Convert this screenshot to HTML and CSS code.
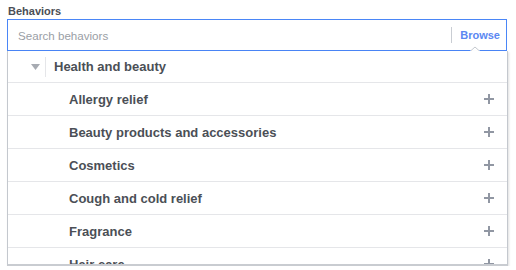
FILE: index.html
```html
<!DOCTYPE html>
<html>
<head>
<meta charset="utf-8">
<link rel="stylesheet" href="styles.css">
</head>
<body>
<div class="field">
  <div class="label">Behaviors</div>
  <div class="search">
    <span class="placeholder">Search behaviors</span>
    <span class="sep"></span>
    <span class="browse">Browse</span>
    <svg class="caret" width="10" height="5" viewBox="0 0 10 5"><path d="M0 5 L5 0.5 L10 5 Z" fill="#fff"/><path d="M0.5 5 L5 1 L9.5 5" fill="none" stroke="#c4c8ce" stroke-width="1"/></svg>
  </div>
  <div class="dropdown">
    <div class="thumb"></div>
    <div class="head">
      <svg class="tri" width="9" height="6" viewBox="0 0 9 6"><path d="M0 0 H9 L4.5 6 Z" fill="#a7abb2"/></svg>
      <span class="vsep"></span>
      <span class="head-text">Health and beauty</span>
    </div>
    <div class="row"><span>Allergy relief</span><svg class="plus" width="10" height="10" viewBox="0 0 10 10"><path d="M5 0V10M0 5H10" stroke="#9197a3" stroke-width="2"/></svg></div>
    <div class="row"><span>Beauty products and accessories</span><svg class="plus" width="10" height="10" viewBox="0 0 10 10"><path d="M5 0V10M0 5H10" stroke="#9197a3" stroke-width="2"/></svg></div>
    <div class="row"><span>Cosmetics</span><svg class="plus" width="10" height="10" viewBox="0 0 10 10"><path d="M5 0V10M0 5H10" stroke="#9197a3" stroke-width="2"/></svg></div>
    <div class="row"><span>Cough and cold relief</span><svg class="plus" width="10" height="10" viewBox="0 0 10 10"><path d="M5 0V10M0 5H10" stroke="#9197a3" stroke-width="2"/></svg></div>
    <div class="row"><span>Fragrance</span><svg class="plus" width="10" height="10" viewBox="0 0 10 10"><path d="M5 0V10M0 5H10" stroke="#9197a3" stroke-width="2"/></svg></div>
    <div class="row"><span>Hair care</span><svg class="plus" width="10" height="10" viewBox="0 0 10 10"><path d="M5 0V10M0 5H10" stroke="#9197a3" stroke-width="2"/></svg></div>
  </div>
</div>
</body>
</html>
```

FILE: styles.css
```css
html, body {
  margin: 0;
  padding: 0;
  background: #fff;
}
body {
  font-family: "Liberation Sans", Arial, sans-serif;
  color: #4b4f56;
}
.field {
  padding: 4px 0 0 7px;
  width: 501px;
}
.label {
  font-size: 11px;
  font-weight: bold;
  line-height: 15px;
  height: 15px;
  padding-left: 1px;
  color: #4b4f56;
}
.search {
  position: relative;
  box-sizing: border-box;
  width: 500px;
  height: 32px;
  border: 1px solid #4a86f7;
  display: flex;
  align-items: center;
  padding: 0 6px 0 10px;
}
.placeholder {
  flex: 1;
  font-size: 11.6px;
  color: #9a9ea5;
}
.sep {
  width: 1px;
  height: 16px;
  background: #c9cdd3;
  margin-right: 8px;
}
.browse {
  font-size: 11px;
  font-weight: bold;
  color: #5b87f2;
}
.caret {
  position: absolute;
  right: 26px;
  bottom: -1px;
  display: block;
}
.dropdown {
  position: relative;
  box-sizing: border-box;
  width: 501px;
  height: 215px;
  overflow: hidden;
  border: 1px solid #c4c8ce;
  border-top: none;
  border-bottom: 2px solid #c9ccd1;
  box-shadow: 1px 1px 2px rgba(0, 0, 0, 0.12);
  background: #fff;
}
.thumb {
  position: absolute;
  right: -1px;
  top: 54px;
  width: 1px;
  height: 82px;
  background: #9ea3aa;
}
.head {
  display: flex;
  align-items: center;
  height: 31px;
  border-bottom: 1px solid #e5e6e9;
  padding-left: 23px;
}
.tri {
  display: block;
  margin-right: 5px;
}
.vsep {
  width: 1px;
  height: 20px;
  background: #e5e6e9;
  margin-right: 8px;
}
.head-text {
  font-size: 13px;
  font-weight: bold;
  color: #4b4f56;
}
.row {
  display: flex;
  align-items: center;
  justify-content: space-between;
  height: 32px;
  border-bottom: 1px solid #e5e6e9;
  padding: 0 13px 0 61px;
  font-size: 13px;
  font-weight: bold;
  color: #4b4f56;
}
.plus {
  display: block;
}
```
